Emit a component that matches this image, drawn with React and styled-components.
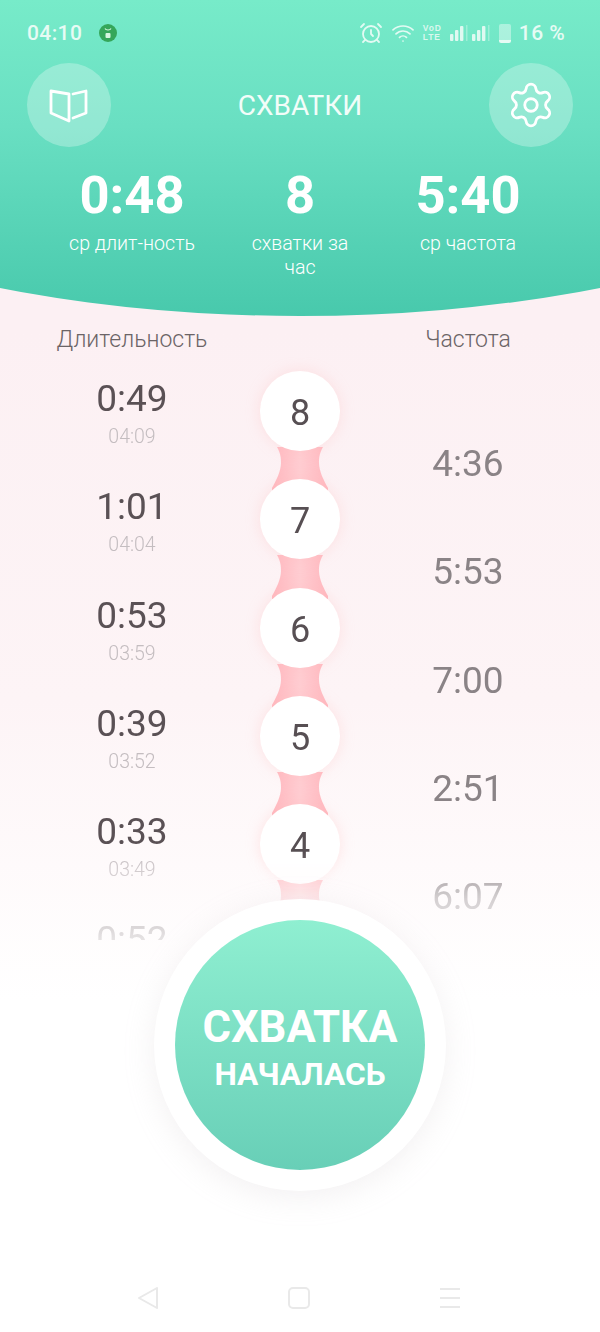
import { Settings, AlarmClock, Wifi } from 'lucide-react';
import styled, { createGlobalStyle } from 'styled-components';

const LEFT_ROWS = [
  ['0:49', '04:09'],
  ['1:01', '04:04'],
  ['0:53', '03:59'],
  ['0:39', '03:52'],
  ['0:33', '03:49'],
  ['0:52', ''],
];
const NUMBERS = [8, 7, 6, 5, 4];
const RIGHT_ROWS = ['4:36', '5:53', '7:00', '2:51', '6:07'];
const STATS = [
  ['0:48', 'ср длит-ность'],
  ['8', 'схватки за\nчас'],
  ['5:40', 'ср частота'],
];

const Signal = () => (
  <svg width="19" height="18" viewBox="0 0 19 18">
    <rect x="0" y="10" width="3.4" height="7" rx="1" fill="#dff9f1" />
    <rect x="5" y="6" width="3.4" height="11" rx="1" fill="#dff9f1" />
    <rect x="10" y="2" width="3.4" height="15" rx="1" fill="#dff9f1" />
    <rect x="16" y="1" width="1.5" height="16" fill="#dff9f1" opacity="0.4" />
  </svg>
);

const App = () => {
  return (
    <Page>
      <GlobalStyle />
      <Header>
        <StatusBar>
          <StatusLeft>
            <StatusText>04:10</StatusText>
            <AppBadge>
              <svg width="18" height="18" viewBox="0 0 18 18">
                <circle cx="9" cy="9" r="9" fill="#35a65a" />
                <path d="M6 4.5c1 2 5 2 6 0" fill="none" stroke="#d5f5df" strokeWidth="1.2" />
                <rect x="6.5" y="9" width="5" height="5" rx="1" fill="#d5f5df" />
              </svg>
            </AppBadge>
          </StatusLeft>
          <StatusRight>
            <AlarmClock size={24} color="#e3faf3" strokeWidth={1.8} />
            <Wifi size={24} color="#e3faf3" strokeWidth={1.7} />
            <NetLabel>
              <span>VoD</span>
              <span>LTE</span>
            </NetLabel>
            <Bars>
              <Signal />
              <Signal />
            </Bars>
            <Battery />
            <StatusText>16 %</StatusText>
          </StatusRight>
        </StatusBar>
        <TopBar>
          <RoundButton>
            <svg width="40" height="36" viewBox="0 0 40 36" fill="none" stroke="#fff" strokeWidth="2.8" strokeLinejoin="round" strokeLinecap="round">
              <path d="M2 4L20 7V34L2 26Z" />
              <path d="M24 7L37 4V26L24 31" />
            </svg>
          </RoundButton>
          <Title>СХВАТКИ</Title>
          <RoundButton>
            <Settings size={50} color="#fff" strokeWidth={1.35} />
          </RoundButton>
        </TopBar>
        <Stats>
          {STATS.map(([value, label]) => (
            <Stat key={label}>
              <StatValue>{value}</StatValue>
              <StatLabel>{label}</StatLabel>
            </Stat>
          ))}
        </Stats>
      </Header>

      <Columns>
        <ColumnTitle>Длительность</ColumnTitle>
        <span />
        <ColumnTitle>Частота</ColumnTitle>
      </Columns>

      <List>
        <div>
          {LEFT_ROWS.map(([time, start]) => (
            <DurationCell key={time}>
              <Duration>{time}</Duration>
              {start && <StartTime>{start}</StartTime>}
            </DurationCell>
          ))}
        </div>
        <Chain>
          {NUMBERS.map((n) => (
            <Node key={n}>
              <Bridge width="60" height="44" viewBox="0 0 60 44">
                <defs>
                  <linearGradient id={`bridge-${n}`} x1="0" x2="1" y1="0" y2="0">
                    <stop offset="0" stopColor="#ffb7be" />
                    <stop offset="0.5" stopColor="#ffcdd2" />
                    <stop offset="1" stopColor="#ffb7be" />
                  </linearGradient>
                </defs>
                <path
                  d="M7 0C11 7 11 12 11 16C11 24 6 34 2 41L2 44L58 44L58 41C54 34 49 24 49 16C49 12 49 7 53 0Z"
                  fill={`url(#bridge-${n})`}
                />
              </Bridge>
              <Circle>{n}</Circle>
            </Node>
          ))}
        </Chain>
        <FrequencyColumn>
          {RIGHT_ROWS.map((value) => (
            <Frequency key={value}>{value}</Frequency>
          ))}
        </FrequencyColumn>
      </List>

      <StartRing>
        <StartButton>
          <StartBig>СХВАТКА</StartBig>
          <StartSmall>НАЧАЛАСЬ</StartSmall>
        </StartButton>
      </StartRing>

      <NavBar>
        <svg width="24" height="24" viewBox="0 0 24 24" fill="none" stroke="#e9e9e9" strokeWidth="2" strokeLinejoin="round">
          <path d="M21 2L3 12l18 10z" />
        </svg>
        <svg width="24" height="24" viewBox="0 0 24 24" fill="none" stroke="#e9e9e9" strokeWidth="2">
          <rect x="2" y="2" width="20" height="20" rx="4" />
        </svg>
        <svg width="24" height="24" viewBox="0 0 24 24" fill="none" stroke="#e9e9e9" strokeWidth="2">
          <path d="M2 3h20M2 12h20M2 21h20" />
        </svg>
      </NavBar>
    </Page>
  );
};

const GlobalStyle = createGlobalStyle`
  html, body {
    margin: 0;
    padding: 0;
    background: #fff;
    font-family: Roboto, "Liberation Sans", sans-serif;
  }
`;

const Page = styled.div`
  width: 600px;
  height: 1332px;
  overflow: hidden;
  background: linear-gradient(180deg, #fcf0f3 0, #fcf0f3 330px, #fdf4f6 700px, #ffffff 1000px);
`;

const Header = styled.header`
  height: 316px;
  box-sizing: border-box;
  color: #fff;
  background: linear-gradient(180deg, #77ebc9 0%, #69dfc2 40%, #48c9ac 100%);
  clip-path: ellipse(729px 316px at 50% 0);
`;

const StatusBar = styled.div`
  height: 63px;
  box-sizing: border-box;
  padding: 20px 35px 0 27px;
  display: flex;
  align-items: flex-start;
  justify-content: space-between;
`;

const StatusLeft = styled.div`
  display: flex;
  align-items: center;
  gap: 17px;
  height: 26px;
`;

const StatusRight = styled.div`
  display: flex;
  align-items: center;
  gap: 8px;
  height: 26px;
`;

const StatusText = styled.span`
  font-size: 21px;
  font-weight: 500;
  letter-spacing: 0.4px;
  color: #e6fbf4;
`;

const AppBadge = styled.span`
  display: flex;
`;

const NetLabel = styled.span`
  width: 19px;
  display: flex;
  flex-direction: column;
  font-family: "Liberation Sans", sans-serif;
  font-size: 8.5px;
  line-height: 9px;
  font-weight: 700;
  letter-spacing: 0.8px;
  color: #d9f8ee;
`;

const Bars = styled.span`
  display: flex;
  gap: 3px;
`;

const Battery = styled.span`
  width: 12px;
  height: 19px;
  border-radius: 2px;
  background: linear-gradient(180deg, rgba(255, 255, 255, 0.4) 0 82%, #e6fbf4 82%);
`;

const TopBar = styled.div`
  height: 84px;
  padding: 0 27px;
  display: flex;
  align-items: center;
  justify-content: space-between;
`;

const RoundButton = styled.button`
  width: 84px;
  height: 84px;
  padding: 0;
  border: 0;
  border-radius: 50%;
  background: rgba(255, 255, 255, 0.28);
  display: flex;
  align-items: center;
  justify-content: center;
`;

const Title = styled.h1`
  margin: 0;
  font-size: 28px;
  font-weight: 400;
  color: #f2fdf9;
`;

const Stats = styled.div`
  margin-top: 19px;
  padding: 0 48px;
  display: grid;
  grid-template-columns: repeat(3, 168px);
`;

const Stat = styled.div`
  display: flex;
  flex-direction: column;
  align-items: center;
  text-align: center;
`;

const StatValue = styled.div`
  font-size: 52.5px;
  line-height: 58px;
  font-weight: 700;
`;

const StatLabel = styled.div`
  margin-top: 8px;
  white-space: pre;
  font-size: 19.6px;
  line-height: 24px;
  font-weight: 300;
`;

const Columns = styled.div`
  height: 41px;
  padding: 0 48px;
  box-sizing: border-box;
  display: grid;
  grid-template-columns: repeat(3, 168px);
  align-items: flex-end;
  text-align: center;
`;

const ColumnTitle = styled.div`
  font-size: 23px;
  line-height: 34px;
  font-weight: 300;
  color: #6b6466;
`;

const List = styled.div`
  height: 583px;
  padding: 0 48px;
  overflow: hidden;
  display: grid;
  grid-template-columns: repeat(3, 168px);
  text-align: center;
  mask-image: linear-gradient(180deg, #000 0, #000 85%, rgba(0, 0, 0, 0.36) 93%, rgba(0, 0, 0, 0.15) 100%);
`;

const DurationCell = styled.div`
  height: 108.25px;
  box-sizing: border-box;
  padding-top: 24px;
`;

const Duration = styled.div`
  font-size: 37px;
  line-height: 36px;
  color: #5a5155;
`;

const StartTime = styled.div`
  margin-top: 8px;
  font-size: 19.5px;
  line-height: 24px;
  font-weight: 300;
  color: #c4bdc0;
`;

const Chain = styled.div`
  padding-top: 14px;
  display: flex;
  flex-direction: column;
  align-items: center;
  gap: 28.25px;
`;

const Node = styled.div`
  position: relative;
  width: 80px;
  height: 80px;
`;

const Bridge = styled.svg`
  position: absolute;
  top: 76px;
  left: 10px;
`;

const Circle = styled.div`
  position: relative;
  z-index: 1;
  width: 80px;
  height: 80px;
  padding-top: 4px;
  box-sizing: border-box;
  border-radius: 50%;
  background: #fff;
  box-shadow: 0 0 14px rgba(255, 190, 190, 0.35);
  display: flex;
  align-items: center;
  justify-content: center;
  font-size: 36px;
  color: #574f53;
`;

const FrequencyColumn = styled.div`
  padding-top: 53px;
`;

const Frequency = styled.div`
  height: 108.25px;
  font-size: 37px;
  line-height: 108.25px;
  color: #8a8386;
`;

const StartRing = styled.div`
  position: relative;
  width: 292px;
  height: 292px;
  margin: -41px auto 0;
  border-radius: 50%;
  background: #fff;
  box-shadow: 0 6px 30px rgba(200, 190, 195, 0.22);
  display: flex;
  align-items: center;
  justify-content: center;
`;

const StartButton = styled.button`
  width: 250px;
  height: 250px;
  padding: 8px 0 0;
  box-sizing: border-box;
  border: 0;
  border-radius: 50%;
  background: linear-gradient(180deg, #8fefd1 0%, #68cfb7 100%);
  color: #fff;
  font-family: inherit;
  display: flex;
  flex-direction: column;
  align-items: center;
  justify-content: center;
`;

const StartBig = styled.span`
  font-size: 43.6px;
  line-height: 50px;
  font-weight: 700;
`;

const StartSmall = styled.span`
  font-size: 31.7px;
  line-height: 43px;
  font-weight: 700;
`;

const NavBar = styled.nav`
  margin-top: 95px;
  padding: 0 138px 0 136px;
  display: flex;
  align-items: center;
  justify-content: space-between;
`;

export default App;
